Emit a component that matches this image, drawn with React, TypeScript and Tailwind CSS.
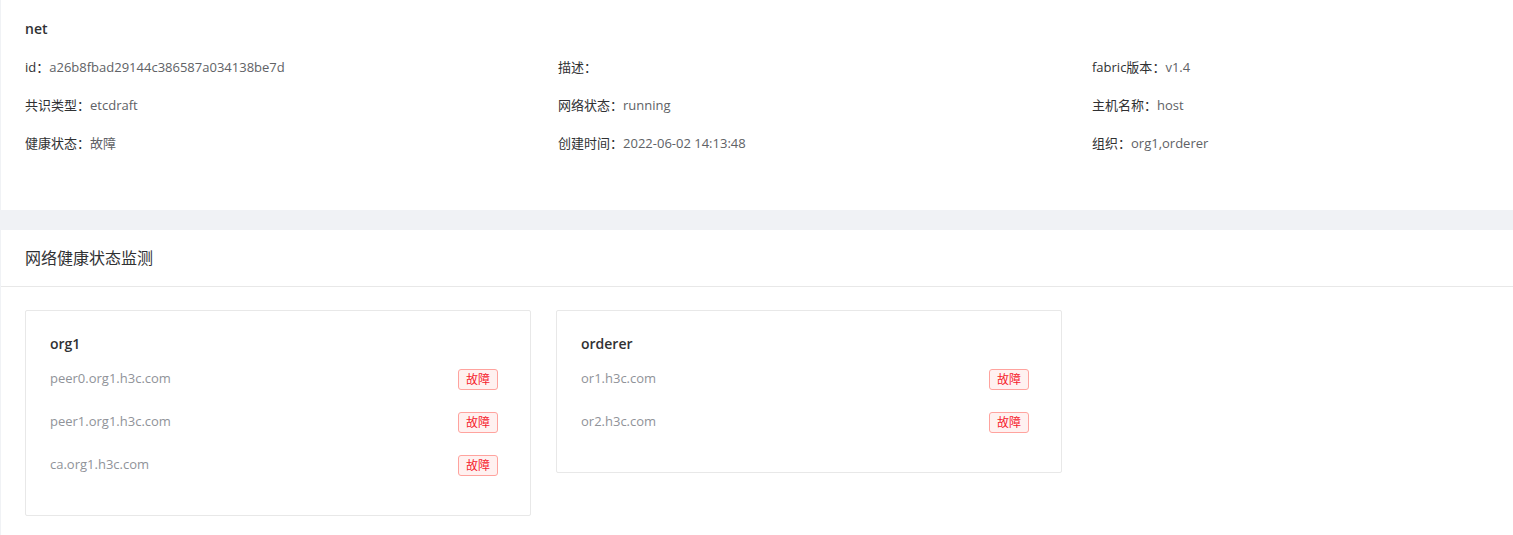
import React from "react";

const font = { fontFamily: '"Open Sans", "Noto Sans CJK SC", sans-serif' };

const info: [string, string][][] = [
  [
    ["id", "a26b8fbad29144c386587a034138be7d"],
    ["描述", ""],
    ["fabric版本", "v1.4"],
  ],
  [
    ["共识类型", "etcdraft"],
    ["网络状态", "running"],
    ["主机名称", "host"],
  ],
  [
    ["健康状态", "故障"],
    ["创建时间", "2022-06-02 14:13:48"],
    ["组织", "org1,orderer"],
  ],
];

const cards = [
  { name: "org1", items: ["peer0.org1.h3c.com", "peer1.org1.h3c.com", "ca.org1.h3c.com"] },
  { name: "orderer", items: ["or1.h3c.com", "or2.h3c.com"] },
];

function Tag() {
  return (
    <span className="inline-flex h-[21px] items-center rounded-[3px] border border-[#ffa39e] bg-[#fff1f0] px-[7px] text-[12px] leading-[19px] text-[#f5222d]">
      故障
    </span>
  );
}

export default function App() {
  return (
    <div className="min-h-screen bg-[#f0f2f5] pl-px" style={font}>
      <div className="h-[210px] bg-white px-[24px]">
        <div className="pt-[19px] text-[14px] font-semibold leading-[20px] text-[#303133]">net</div>
        <div className="mt-[18px] flex flex-col gap-[18px]">
          {info.map((row, i) => (
            <div key={i} className="grid grid-cols-[533px_534px_1fr] text-[13px] leading-[20px]">
              {row.map(([k, v]) => (
                <div key={k} className="whitespace-nowrap">
                  <span className="text-[#303133]">{k}：</span>
                  <span className="text-[#606266]">{v}</span>
                </div>
              ))}
            </div>
          ))}
        </div>
      </div>
      <div className="mt-[20px] min-h-[305px] bg-white">
        <div className="flex h-[57px] items-center border-b border-[#e8e8e8] px-[24px] pb-px text-[16px] text-[#303133]">
          网络健康状态监测
        </div>
        <div className="flex items-start gap-[25px] px-[24px] pt-[23px]">
          {cards.map((c) => (
            <div
              key={c.name}
              className="w-[506px] rounded-[2px] border border-[#e8e8e8] pb-[40px] pl-[24px] pr-[32px] pt-[23px]"
            >
              <div className="text-[14px] font-semibold leading-[20px] text-[#303133]">{c.name}</div>
              <div className="mt-[15px] flex flex-col gap-[23px]">
                {c.items.map((it) => (
                  <div key={it} className="flex h-[20px] items-center justify-between">
                    <span className="text-[13px] text-[#909399]">{it}</span>
                    <Tag />
                  </div>
                ))}
              </div>
            </div>
          ))}
        </div>
      </div>
    </div>
  );
}
